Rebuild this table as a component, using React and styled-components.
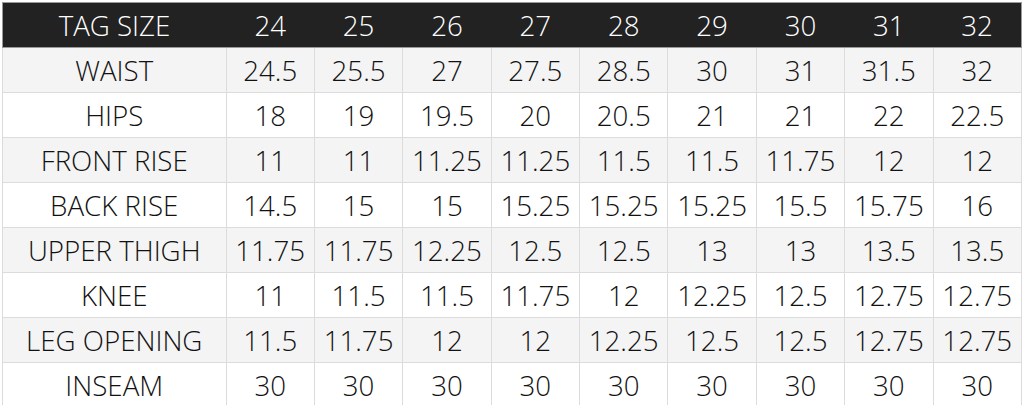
import React from 'react'
import styled, { createGlobalStyle } from 'styled-components'

const GlobalStyle = createGlobalStyle`
  html, body {
    margin: 0;
    padding: 0;
    background: #fff;
  }
  body {
    font-family: "Open Sans", "Liberation Sans", sans-serif;
  }
`

const Wrapper = styled.div`
  padding: 2px 0 0 2px;
`

const Table = styled.table`
  width: 1020px;
  border-collapse: collapse;
  table-layout: fixed;
  font-size: 27.7px;
  font-weight: 300;
  color: #111;
`

const HeadCell = styled.th`
  height: 44px;
  padding: 0;
  background: #222222;
  color: #fff;
  font-weight: 300;
  text-align: center;
  border: 1px solid #9a9a9a;
  border-left: ${p => (p.$first ? '1px solid #9a9a9a' : 'none')};
  border-right: ${p => (p.$last ? '1px solid #9a9a9a' : 'none')};
  width: ${p => (p.$first ? '223px' : 'auto')};
`

const Row = styled.tr`
  background: ${p => (p.$shade ? '#f4f4f4' : '#ffffff')};
`

const Cell = styled.td`
  height: 44px;
  padding: 0;
  text-align: center;
  border: 1px solid #dcdcdc;
  white-space: nowrap;
  overflow: hidden;
`

const sizes = ['24', '25', '26', '27', '28', '29', '30', '31', '32']

const rows = [
  ['WAIST', '24.5', '25.5', '27', '27.5', '28.5', '30', '31', '31.5', '32'],
  ['HIPS', '18', '19', '19.5', '20', '20.5', '21', '21', '22', '22.5'],
  ['FRONT RISE', '11', '11', '11.25', '11.25', '11.5', '11.5', '11.75', '12', '12'],
  ['BACK RISE', '14.5', '15', '15', '15.25', '15.25', '15.25', '15.5', '15.75', '16'],
  ['UPPER THIGH', '11.75', '11.75', '12.25', '12.5', '12.5', '13', '13', '13.5', '13.5'],
  ['KNEE', '11', '11.5', '11.5', '11.75', '12', '12.25', '12.5', '12.75', '12.75'],
  ['LEG OPENING', '11.5', '11.75', '12', '12', '12.25', '12.5', '12.5', '12.75', '12.75'],
  ['INSEAM', '30', '30', '30', '30', '30', '30', '30', '30', '30'],
]

export default function App() {
  return (
    <Wrapper>
      <GlobalStyle />
      <Table>
        <thead>
          <tr>
            <HeadCell $first>TAG SIZE</HeadCell>
            {sizes.map((s, i) => (
              <HeadCell key={s} $last={i === sizes.length - 1}>{s}</HeadCell>
            ))}
          </tr>
        </thead>
        <tbody>
          {rows.map((r, i) => (
            <Row key={r[0]} $shade={i % 2 === 0}>
              {r.map((v, j) => (
                <Cell key={j}>{v}</Cell>
              ))}
            </Row>
          ))}
        </tbody>
      </Table>
    </Wrapper>
  )
}
